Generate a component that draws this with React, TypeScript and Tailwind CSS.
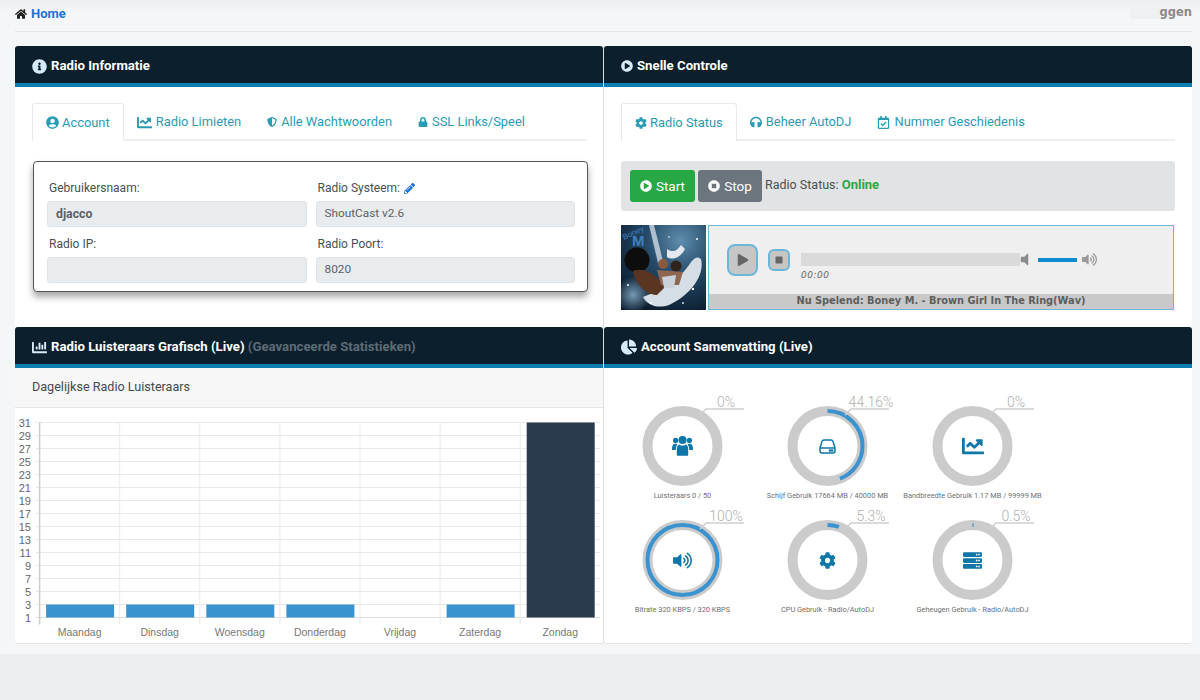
import React from 'react';
import {
  FaHome, FaInfoCircle, FaPlayCircle, FaChartLine, FaShieldAlt, FaLock, FaCog, FaHeadphones,
  FaRegCalendarCheck, FaStopCircle, FaPencilAlt, FaChartBar, FaChartPie, FaServer, FaVolumeUp,
  FaVolumeOff, FaUserCircle, FaPlay, FaStop,
} from 'react-icons/fa';

const DAYS = ['Maandag', 'Dinsdag', 'Woensdag', 'Donderdag', 'Vrijdag', 'Zaterdag', 'Zondag'];
const TICKS = [1, 3, 5, 7, 9, 11, 13, 15, 17, 19, 21, 23, 25, 27, 29, 31];
const BARS = [3, 3, 3, 3, 1, 3, 31];

function UsersIcon() {
  return (
    <svg width="21" height="20" viewBox="0 0 21 20" fill="currentColor">
      <circle cx="3.6" cy="4.4" r="2.6" />
      <circle cx="17.4" cy="4.4" r="2.6" />
      <circle cx="10.5" cy="4" r="4" />
      <path d="M0 13.5 C0 9.5 1.2 7.8 3.6 7.8 C4.4 7.8 5 8 5.4 8.4 C4.2 10 3.8 11.5 3.8 14 L1 14 C0.4 14 0 13.9 0 13.5 Z" />
      <path d="M21 13.5 C21 9.5 19.8 7.8 17.4 7.8 C16.6 7.8 16 8 15.6 8.4 C16.8 10 17.2 11.5 17.2 14 L20 14 C20.6 14 21 13.9 21 13.5 Z" />
      <path d="M4.8 18.5 L4.8 13 C4.8 10.2 6 8.6 7.4 8.4 C8.2 9.2 9.2 9.6 10.5 9.6 C11.8 9.6 12.8 9.2 13.6 8.4 C15 8.6 16.2 10.2 16.2 13 L16.2 18.5 C16.2 19.4 15.8 19.8 15 19.8 L6 19.8 C5.2 19.8 4.8 19.4 4.8 18.5 Z" />
    </svg>
  );
}

function DiskIcon() {
  return (
    <svg width="17" height="15" viewBox="0 0 17 15" fill="none" stroke="currentColor" strokeWidth="1.5">
      <path d="M1 9 L3 2.4 C3.3 1.4 4 1 5 1 L12 1 C13 1 13.7 1.4 14 2.4 L16 9 L16 12 C16 13.2 15.2 14 14 14 L3 14 C1.8 14 1 13.2 1 12 Z" />
      <path d="M1 9 L16 9" />
      <circle cx="11" cy="11.5" r="0.6" fill="currentColor" />
      <circle cx="13.2" cy="11.5" r="0.6" fill="currentColor" />
    </svg>
  );
}

const GAUGES = [
  { pct: 0, shown: '0%', label: 'Luisteraars 0 / 50', icon: <UsersIcon /> },
  { pct: 44.16, shown: '44.16%', label: 'Schijf Gebruik 17664 MB / 40000 MB', icon: <DiskIcon /> },
  { pct: 0, shown: '0%', label: 'Bandbreedte Gebruik 1.17 MB / 99999 MB', icon: <FaChartLine size={22} /> },
  { pct: 100, shown: '100%', label: 'Bitrate 320 KBPS / 320 KBPS', icon: <FaVolumeUp size={19} /> },
  { pct: 5.3, shown: '5.3%', label: 'CPU Gebruik - Radio/AutoDJ', icon: <FaCog size={17} /> },
  { pct: 0.5, shown: '0.5%', label: 'Geheugen Gebruik - Radio/AutoDJ', icon: <FaServer size={19} /> },
];

function CardHeader({ icon, children }: { icon: React.ReactNode; children: React.ReactNode }) {
  return (
    <div className="h-[41px] flex items-center gap-[4px] pl-[17px] pt-[3px] bg-[#0c1f2d] border-b-[4px] border-[#0c7fb0] rounded-t-[3px] text-white text-[13.2px] font-bold">
      {icon}
      <span>{children}</span>
    </div>
  );
}

function Tabs({ items }: { items: { icon: React.ReactNode; label: string }[] }) {
  return (
    <div className="h-[38px] flex border-b-2 border-[#eeeeee] text-[12.9px] text-[#2a9bb3]">
      {items.map((t, i) => (
        <div
          key={t.label}
          className={
            i === 0
              ? 'h-[38px] flex items-center gap-[3px] px-[13px] bg-white border border-b-0 border-[#e9e9e9] rounded-t-[3px]'
              : 'h-[38px] flex items-center gap-[4px] px-[13px]'
          }
        >
          {t.icon}
          <span>{t.label}</span>
        </div>
      ))}
    </div>
  );
}

function Field({ label, value, bold, extra }: { label: string; value: string; bold?: boolean; extra?: React.ReactNode }) {
  return (
    <div>
      <div className="h-[18px] flex items-center gap-[4px] pl-[2px] text-[12px] text-[#4a4f54]">
        {label}
        {extra}
      </div>
      <div className={`mt-[4px] h-[26px] flex items-center pl-[8px] bg-[#e9ecef] border border-[#e0e3e6] rounded-[3px] text-[#5b6167] ${bold ? 'font-bold text-[12.3px]' : 'text-[11.8px]'}`}>
        {value}
      </div>
    </div>
  );
}

function AlbumArt() {
  return (
    <svg width="85" height="85" viewBox="0 0 85 85" className="shrink-0">
      <defs>
        <radialGradient id="sky" cx="70%" cy="18%" r="90%">
          <stop offset="0%" stopColor="#5f8dae" />
          <stop offset="45%" stopColor="#254a68" />
          <stop offset="100%" stopColor="#0b1c2e" />
        </radialGradient>
        <radialGradient id="cloud">
          <stop offset="0%" stopColor="#8fb8d4" stopOpacity="0.8" />
          <stop offset="100%" stopColor="#8fb8d4" stopOpacity="0" />
        </radialGradient>
        <filter id="soft">
          <feGaussianBlur stdDeviation="0.7" />
        </filter>
      </defs>
      <rect width="85" height="85" fill="url(#sky)" />
      <circle cx="12" cy="70" r="18" fill="url(#cloud)" />
      <g filter="url(#soft)">
        <path d="M28 0 L33 0 L42 36 L37 38 Z" fill="#d8e2ea" opacity="0.75" />
        <path d="M22 72 C36 66 52 62 68 40 C72 34 76 30 80 34 C84 50 70 70 48 80 C36 84 26 80 22 72 Z" fill="#d5dee5" />
        <path d="M46 24 C52 28 56 26 60 20 L64 24 C60 32 52 36 46 32 Z" fill="#e2e8ed" />
        <circle cx="16" cy="35" r="12.5" fill="#0a0808" />
        <path d="M12 46 C22 42 34 48 44 62 L36 70 C26 70 14 60 12 46 Z" fill="#5a3424" />
        <circle cx="42" cy="39" r="5" fill="#8a5a40" />
        <circle cx="55" cy="41" r="5.5" fill="#33211c" />
        <path d="M36 45 L62 47 L58 60 L40 60 Z" fill="#8f6650" />
        <path d="M41 52 L55 50 L53 63 L43 63 Z" fill="#c9d2d9" />
      </g>
      <circle cx="7" cy="60" r="1" fill="#fff" />
      <circle cx="72" cy="64" r="1.2" fill="#fff" />
      <circle cx="76" cy="14" r="1" fill="#fff" />
      <circle cx="30" cy="78" r="1" fill="#fff" />
      <circle cx="62" cy="78" r="1" fill="#cfe0ec" />
      <circle cx="48" cy="12" r="0.8" fill="#fff" />
      <text x="3" y="15" fontSize="8" fontFamily="Liberation Sans" fill="#3f7fc0" transform="rotate(-25 3 15)">Boney</text>
      <text x="11" y="21" fontSize="15" fontFamily="Liberation Sans" fontWeight="bold" fill="#3f7fc0">M</text>
    </svg>
  );
}

function Player() {
  return (
    <div className="flex h-[85px] gap-[2px]">
      <AlbumArt />
      <div className="w-[466px] flex flex-col bg-[#efefef] border border-[#6cb7d8]">
        <div className="h-[68px] flex pl-[18px] pt-[18px]">
          <div className="w-[31px] h-[32px] flex items-center justify-center bg-[#c6c6c6] border-2 border-[#6cb7d8] rounded-[8px] text-[#666666]">
            <FaPlay size={12} />
          </div>
          <div className="ml-[10px] mt-[5px] w-[22px] h-[22px] flex items-center justify-center bg-[#c6c6c6] border-2 border-[#6cb7d8] rounded-[6px] text-[#666666]">
            <FaStop size={8} />
          </div>
          <div className="ml-[11px] mt-[9px]">
            <div className="flex items-center h-[13px]">
              <div className="w-[219px] h-[13px] bg-[#dadada]" />
              <FaVolumeOff size={15} className="-ml-[3px] text-[#8c8c8c]" />
              <div className="ml-[6px] w-[39px] h-[4px] bg-[#0f8bd0]" />
              <FaVolumeUp size={15} className="ml-[5px] text-[#9a9a9a]" />
            </div>
            <div className="mt-[3px] text-[9px] italic tracking-[0.5px] text-[#666666] font-['DejaVu_Sans',sans-serif]">00:00</div>
          </div>
        </div>
        <div className="h-[15px] flex items-center justify-center bg-[#c9c9c9] text-[9.8px] font-bold text-[#5d5d5d] font-['DejaVu_Sans',sans-serif]">
          Nu Spelend: Boney M. - Brown Girl In The Ring(Wav)
        </div>
      </div>
    </div>
  );
}

function ListenerChart() {
  const y = (v: number) => 209.5 - ((v - 1) / 30) * 195;
  const x0 = 24.6;
  const step = 80.1;
  return (
    <svg width="588" height="235" viewBox="0 0 588 235" className="block">
      {TICKS.map((t) => (
        <g key={t}>
          <line x1={x0 - 4} x2={585} y1={y(t)} y2={y(t)} stroke={t === 1 ? '#dddddd' : '#e9e9e9'} strokeWidth="1" />
          <text x="16" y={y(t) + 4} textAnchor="end" fontSize="11" fontFamily="Liberation Sans" fill="#666666">{t}</text>
        </g>
      ))}
      {DAYS.map((d, i) => (
        <g key={d}>
          <line x1={x0 + i * step} x2={x0 + i * step} y1={y(31)} y2={y(1) + 7} stroke={i === 0 ? '#cccccc' : '#e9e9e9'} strokeWidth={i === 0 ? 1.5 : 1} />
          {BARS[i] > 1 && (
            <rect
              x={x0 + i * step + 6.5}
              y={y(BARS[i])}
              width={68}
              height={y(1) - y(BARS[i])}
              fill={i === 6 ? '#2a3b4d' : '#3a92cf'}
            />
          )}
          <text x={x0 + i * step + 40} y={y(1) + 18} textAnchor="middle" fontSize="10.5" fontFamily="Liberation Sans" fill="#777777">{d}</text>
        </g>
      ))}
    </svg>
  );
}

function Gauge({ pct, shown, label, icon }: { pct: number; shown: string; label: string; icon: React.ReactNode }) {
  const r = 35;
  const c = 2 * Math.PI * r;
  return (
    <div className="w-[145px] flex flex-col items-center">
      <div className="relative w-[145px] h-[94px]">
        <svg width="145" height="94" viewBox="0 0 145 94" className="block">
          <circle cx="72.5" cy="54" r={r} fill="none" stroke="#cbcbcb" strokeWidth="10" />
          {pct > 0 && (
            <circle
              cx="72.5"
              cy="54"
              r={r}
              fill="none"
              stroke="#3a92cf"
              strokeWidth="4"
              strokeDasharray={`${(pct / 100) * c} ${c}`}
              transform="rotate(-90 72.5 54)"
            />
          )}
          <polyline points="90,23 96,17 134,17" fill="none" stroke="#d0d0d0" strokeWidth="1.5" />
          <text x="116" y="15" textAnchor="middle" fontSize="14" fontFamily="Roboto" fontWeight="300" fill="#b0b0b0">{shown}</text>
        </svg>
        <div className="absolute left-0 right-0 top-[34px] h-[40px] flex items-center justify-center text-[#0f76a8]">{icon}</div>
      </div>
      <div className="mt-[5px] text-[7.4px] leading-[10px] whitespace-nowrap text-[#6f6f6f]">{label}</div>
    </div>
  );
}

export default function App() {
  return (
    <div className="h-[700px] overflow-hidden bg-[#eceef0] font-['Roboto',sans-serif]">
      <div className="h-[654px] pl-[15px] pr-[8px] bg-gradient-to-b from-[#eceef0] via-[#f5f6f8] via-[2%] to-[#f5f6f8]">
        <div className="h-[32px] flex items-start justify-between border-b border-[#e2e4e6] pt-[4px]">
          <div className="flex items-center gap-[4px] text-[13px] font-bold text-[#1a73d8]">
            <FaHome size={12} className="text-[#222222]" />
            Home
          </div>
          <div className="flex items-center text-[11.5px] font-bold text-[#8a8a8a] font-['DejaVu_Sans',sans-serif]">
            <div className="w-[30px] h-[12px] bg-[#eff0f2]" />
            ggen
          </div>
        </div>

        <div className="mt-[14px] grid grid-cols-[589px_588px] grid-rows-[281px_317px]">
          {/* Radio informatie */}
          <div className="bg-white border-r border-[#dddddd]">
            <CardHeader icon={<FaInfoCircle size={15} className="text-[#d5ecf8]" />}>Radio Informatie</CardHeader>
            <div className="pl-[17px] pr-[17px] pt-[16px]">
              <Tabs
                items={[
                  { icon: <FaUserCircle size={13} />, label: 'Account' },
                  { icon: <FaChartLine size={15} />, label: 'Radio Limieten' },
                  { icon: <FaShieldAlt size={10} />, label: 'Alle Wachtwoorden' },
                  { icon: <FaLock size={10} />, label: 'SSL Links/Speel' },
                ]}
              />
              <div className="mt-[20px] ml-[1px] w-[555px] h-[131px] pl-[13px] pr-[12px] pt-[17px] bg-white border border-[#555555] rounded-[4px] shadow-[0_5px_7px_rgba(0,0,0,0.35)] grid grid-cols-2 gap-x-[9px] gap-y-[8px] content-start">
                <Field label="Gebruikersnaam:" value="djacco" bold />
                <Field label="Radio Systeem:" value="ShoutCast v2.6" extra={<FaPencilAlt size={11} className="text-[#1a73d8]" />} />
                <Field label="Radio IP:" value="" />
                <Field label="Radio Poort:" value="8020" />
              </div>
            </div>
          </div>

          {/* Snelle controle */}
          <div className="bg-white">
            <CardHeader icon={<FaPlayCircle size={12} className="text-[#d5ecf8]" />}>Snelle Controle</CardHeader>
            <div className="pl-[17px] pr-[17px] pt-[16px]">
              <Tabs
                items={[
                  { icon: <FaCog size={12} />, label: 'Radio Status' },
                  { icon: <FaHeadphones size={12} />, label: 'Beheer AutoDJ' },
                  { icon: <FaRegCalendarCheck size={13} />, label: 'Nummer Geschiedenis' },
                ]}
              />
              <div className="mt-[20px] h-[50px] flex items-center gap-[3px] pl-[9px] bg-[#e2e3e5] rounded-[3px] text-[12.5px] text-[#4a4f54]">
                <div className="w-[65px] h-[32px] flex items-center justify-center gap-[4px] bg-[#28a745] rounded-[3px] text-white text-[13.5px]">
                  <FaPlayCircle size={12} />
                  Start
                </div>
                <div className="w-[64px] h-[32px] flex items-center justify-center gap-[4px] bg-[#6c757d] rounded-[3px] text-white text-[13.5px]">
                  <FaStopCircle size={12} />
                  Stop
                </div>
                <div className="pb-[2px]">
                  Radio Status: <span className="text-[13px] font-bold text-[#28a745]">Online</span>
                </div>
              </div>
              <div className="mt-[14px]">
                <Player />
              </div>
            </div>
          </div>

          {/* Luisteraars */}
          <div className="bg-white border-r border-[#dddddd] border-b border-b-[#e4e4e4] rounded-b-[3px]">
            <CardHeader icon={<FaChartBar size={15} className="text-[#d5ecf8]" />}>
              Radio Luisteraars Grafisch (Live) <span className="text-[#5f6b75]">(Geavanceerde Statistieken)</span>
            </CardHeader>
            <div className="h-[40px] flex items-center pl-[17px] bg-[#f7f7f7] border-b border-[#e5e5e5] text-[12.6px] text-[#444a50]">
              Dagelijkse Radio Luisteraars
            </div>
            <ListenerChart />
          </div>

          {/* Samenvatting */}
          <div className="bg-white border-b border-[#e4e4e4] rounded-b-[3px]">
            <CardHeader icon={<FaChartPie size={16} className="text-[#d5ecf8]" />}>Account Samenvatting (Live)</CardHeader>
            <div className="pt-[24px] grid grid-cols-[repeat(3,145px)] gap-y-[5px] pl-[6px]">
              {GAUGES.map((g) => (
                <Gauge key={g.label} {...g} />
              ))}
            </div>
          </div>
        </div>
      </div>
    </div>
  );
}
